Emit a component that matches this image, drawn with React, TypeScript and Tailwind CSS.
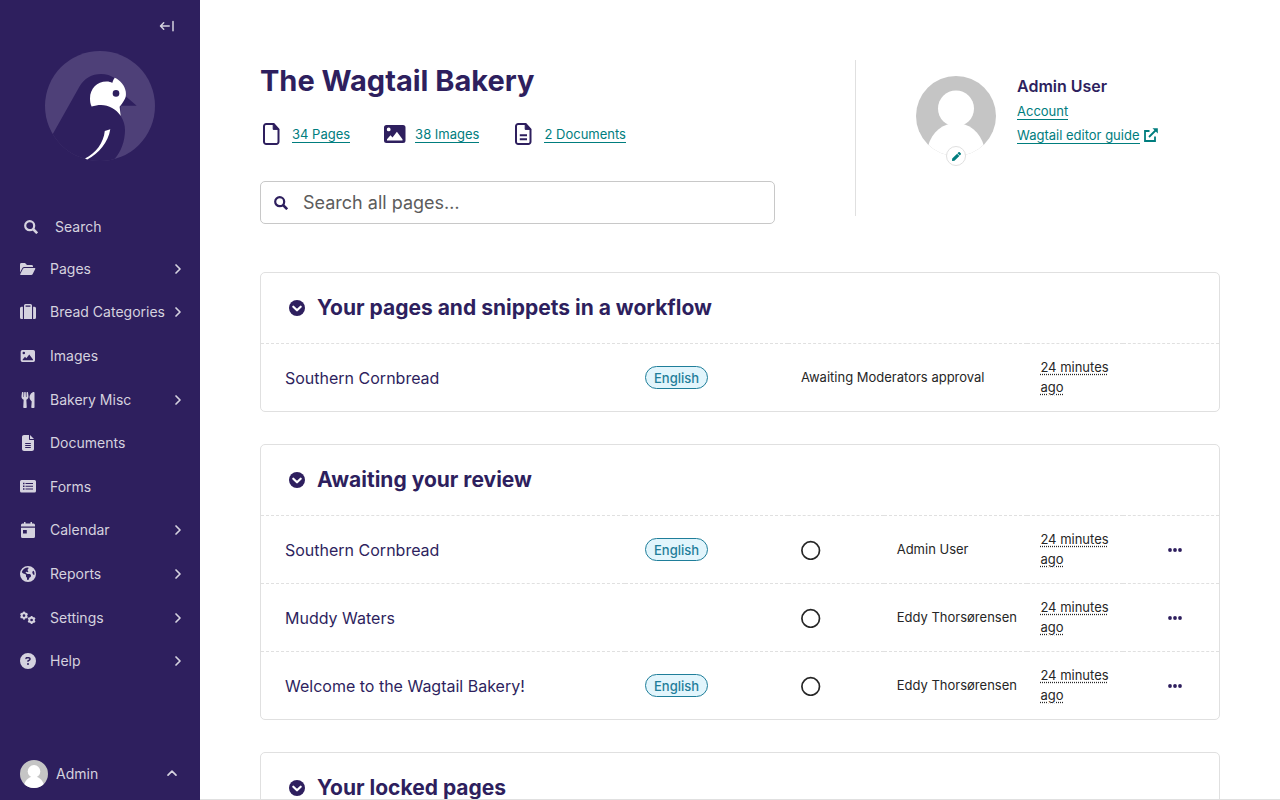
import type { ReactNode } from "react";
import { FaUtensils, FaPen } from "react-icons/fa";
import { FaFileLines, FaEarthAmericas, FaCircleQuestion } from "react-icons/fa6";

function Logo() {
  return (
    <svg viewBox="0 0 110 110" className="size-[110px]" aria-hidden="true">
      <defs>
        <clipPath id="logo-circle">
          <circle cx="55" cy="55" r="55" />
        </clipPath>
      </defs>
      <circle cx="55" cy="55" r="55" fill="#4e4078" />
      <g clipPath="url(#logo-circle)">
        <path
          d="M7.5 83.5 L34.5 35.5 C39 27.5 47 23 56 23 C61 23 66 24.5 70 27.3 L81 45.5 L91.7 54.7 L75.5 54.7 L75.7 65 C78.5 69 80 74 80 79 C80 90 76 101 69.5 108 L60 115 L20 110 L0 95 Z"
          fill="#2e1f5e"
        />
      </g>
      <path
        d="M69.8 26.8 C75.5 29.5 79.8 34.5 80.8 40.8 C81 42.5 81 44 80.8 45.2 C80 49 76 54 74.6 55.8 L75.8 65 C71 58 64 54 56 54 C53 54 49.5 54.6 46.6 55.6 C45.3 53 45 50 45 47.3 C45 38 52 30.6 61.5 30.6 C64 30.6 66 31.2 67.2 32 C67.8 31.2 68 28.6 69.8 26.8 Z"
        fill="#fff"
      />
      <circle cx="71" cy="42.4" r="3.3" fill="#2e1f5e" />
      <path
        d="M65.3 78.3 L59.8 80 C58.5 92 51 102 40 107.6 L42.2 108.6 C54 102 63 92 65.3 78.3 Z"
        fill="#fff"
      />
    </svg>
  );
}

function Avatar({ className }: { className: string }) {
  return (
    <svg viewBox="0 0 80 80" className={`rounded-full ${className}`} role="img" aria-label="Avatar">
      <rect width="80" height="80" fill="#c5c5c5" />
      <g fill="#fff">
        <circle cx="40" cy="32.5" r="18" />
        <path d="M12 70 C16 56 27 47 40 47 C53 47 64 56 68 70 L68 80 L12 80 Z" />
      </g>
    </svg>
  );
}

function FolderIcon() {
  return (
    <svg viewBox="0 0 16 16" className="size-4" fill="currentColor" aria-hidden="true">
      <path d="M0 3.4A1.4 1.4 0 0 1 1.4 2H5L7 3.9h4.6A1.4 1.4 0 0 1 13 5.3V6H4.4A2.6 2.6 0 0 0 2.1 7.4L0 11.5Z" />
      <path d="M4.4 6.9h10.2c.6 0 .9.6.6 1.1l-2.6 5.2a1.6 1.6 0 0 1-1.4.8H1c-.6 0-1-.6-.7-1.100L3 7.7a1.600 1.600 0 0 1 1.400-.8Z" />
    </svg>
  );
}

function SuitcaseIcon() {
  return (
    <svg viewBox="0 0 16 16" className="size-4" fill="currentColor" aria-hidden="true">
      <path
        fillRule="evenodd"
        d="M4 15V1.500A1.500 1.500 0 0 1 5.500 0h5A1.500 1.500 0 0 1 12 1.500V15ZM5.600 1.500v1.200h4.800V1.500Z"
      />
      <path d="M2.900 2.700V15H1.500A1.500 1.500 0 0 1 0 13.500V4.200a1.500 1.500 0 0 1 1.500-1.500ZM13.100 2.700V15h1.400A1.500 1.500 0 0 0 16 13.500V4.200a1.500 1.500 0 0 0-1.500-1.500Z" />
    </svg>
  );
}

function ImageIcon({ className }: { className: string }) {
  return (
    <svg viewBox="0 0 24 24" className={className} fill="currentColor" aria-hidden="true">
      <path
        fillRule="evenodd"
        d="M3.500 3h16.500a2.500 2.500 0 0 1 2.500 2.500v13a2.500 2.500 0 0 1-2.500 2.500H3.500A2.500 2.500 0 0 1 1 18.500v-13A2.500 2.500 0 0 1 3.500 3ZM5.700 5.500a1.900 1.900 0 1 0 0 3.800 1.900 1.900 0 0 0 0-3.800ZM4 18.500h15.500v-1.200L13.900 9.700 9.500 15.500 7.500 13.200 4 17.300Z"
      />
    </svg>
  );
}

function SearchIcon() {
  return (
    <svg
      viewBox="0 0 14 14"
      className="size-[14px] shrink-0"
      fill="none"
      stroke="currentColor"
      strokeWidth="2.200"
      aria-hidden="true"
    >
      <circle cx="5.700" cy="5.700" r="4.500" />
      <path d="M9 9L13.200 13.200" strokeWidth="2.600" />
    </svg>
  );
}

function ListIcon() {
  return (
    <svg viewBox="0 0 16 16" className="size-4" fill="currentColor" aria-hidden="true">
      <path
        fillRule="evenodd"
        d="M1.500 1h13A1.500 1.500 0 0 1 16 2.500v9.500a1.500 1.500 0 0 1-1.500 1.500h-13A1.500 1.500 0 0 1 0 12V2.500A1.500 1.500 0 0 1 1.500 1ZM3 3.700v1.500h1.500v-1.500ZM5.500 3.900v1.100h7.500v-1.100ZM3 6.500v1.500h1.500v-1.500ZM5.500 6.700v1.100h7.500v-1.100ZM3 9.300v1.500h1.500v-1.500ZM5.500 9.500v1.100h7.500v-1.100Z"
      />
    </svg>
  );
}

function CalendarIcon() {
  return (
    <svg viewBox="0 0 16 16" className="size-4" fill="currentColor" aria-hidden="true">
      <path d="M4 0h1.500v1.600h5V0H12v1.600h1.500A1.500 1.500 0 0 1 15 3.100V4.500H1V3.100a1.500 1.500 0 0 1 1.500-1.500H4Z" />
      <path
        fillRule="evenodd"
        d="M1 5.700h14v8.800a1.500 1.500 0 0 1-1.500 1.500h-11A1.500 1.500 0 0 1 1 14.500ZM3 8v3.600h3.800V8Z"
      />
    </svg>
  );
}

function Gear({ x, y }: { x: number; y: number }) {
  return (
    <g transform={`translate(${x} ${y})`}>
      <circle r="2.300" fill="none" stroke="currentColor" strokeWidth="1.900" />
      {[0, 60, 120, 180, 240, 300].map((a) => (
        <rect key={a} x="-0.900" y="-4" width="1.800" height="1.500" transform={`rotate(${a})`} />
      ))}
    </g>
  );
}

function CogsIcon() {
  return (
    <svg viewBox="0 0 16 16" className="size-4" fill="currentColor" aria-hidden="true">
      <Gear x={4} y={5.6} />
      <Gear x={11.6} y={10} />
    </svg>
  );
}

function Chevron({ up }: { up?: boolean }) {
  return (
    <svg
      viewBox="0 0 16 16"
      className="size-4 shrink-0"
      fill="none"
      stroke="currentColor"
      strokeWidth="1.700"
      strokeLinecap="round"
      strokeLinejoin="round"
      aria-hidden="true"
    >
      <path d={up ? "M4 9.200 L8 5.200 L12 9.200" : "M6 4 L10 8 L6 12"} />
    </svg>
  );
}

type NavItem = { label: string; icon: ReactNode; sub?: boolean };

const navItems: NavItem[] = [
  { label: "Pages", icon: <FolderIcon />, sub: true },
  { label: "Bread Categories", icon: <SuitcaseIcon />, sub: true },
  { label: "Images", icon: <ImageIcon className="size-4" /> },
  { label: "Bakery Misc", icon: <FaUtensils className="size-4" />, sub: true },
  { label: "Documents", icon: <FaFileLines className="size-4" /> },
  { label: "Forms", icon: <ListIcon /> },
  { label: "Calendar", icon: <CalendarIcon />, sub: true },
  { label: "Reports", icon: <FaEarthAmericas className="size-4" />, sub: true },
  { label: "Settings", icon: <CogsIcon />, sub: true },
  { label: "Help", icon: <FaCircleQuestion className="size-4" />, sub: true },
];

function Sidebar() {
  return (
    <aside className="flex w-[200px] shrink-0 flex-col bg-[#2e1f5e] text-sm text-[#d5d2df]">
      <div className="flex justify-end px-[25px] pt-[18px]">
        <button type="button" aria-label="Collapse sidebar" className="size-4">
          <svg
            viewBox="0 0 16 16"
            className="size-4"
            fill="none"
            stroke="currentColor"
            strokeWidth="1.500"
            strokeLinecap="round"
            strokeLinejoin="round"
            aria-hidden="true"
          >
            <path d="M10.200 8H1.700M4.700 4.800 L1.500 8 L4.700 11.200M14 3.400V12.800" />
          </svg>
        </button>
      </div>
      <a href="#home" aria-label="Home" className="mt-[17px] self-center">
        <Logo />
      </a>
      <button type="button" className="mt-11 flex h-[42px] items-center gap-[17px] px-6 pt-0.5 text-left">
        <SearchIcon />
        Search
      </button>
      <nav aria-label="Main menu">
        <ul className="flex h-[436px] flex-col">
          {navItems.map((item) => (
            <li key={item.label} className="flex flex-1">
              <a href="#menu" className="flex flex-1 items-center pr-[14px] pl-5">
                {item.icon}
                <span className="ml-[14px] flex-1 whitespace-nowrap">{item.label}</span>
                {item.sub && <Chevron />}
              </a>
            </li>
          ))}
        </ul>
      </nav>
      <button type="button" className="mt-auto flex h-[52px] items-center px-5 text-left">
        <Avatar className="size-7" />
        <span className="ml-2 flex-1">Admin</span>
        <Chevron up />
      </button>
    </aside>
  );
}

function DocIcon({ lines }: { lines?: boolean }) {
  return (
    <svg viewBox="0 0 24 24" className="size-6" fill="none" stroke="currentColor" strokeWidth="2" aria-hidden="true">
      <path d="M13.500 2H6.200A2.200 2.200 0 0 0 4 4.200v15.600A2.200 2.200 0 0 0 6.200 22h10.100a2.200 2.200 0 0 0 2.200-2.200V7.300L13.700 2Z" />
      <path d="M13.200 2v5.400H18.500Z" fill="currentColor" strokeWidth="1" />
      {lines && <path d="M7.800 13.200h7.200M7.800 17.200h7.200" />}
    </svg>
  );
}

const link = "border-b border-[#007d7e] pt-px text-[13px] leading-4 text-[#007d7e]";

function Summary() {
  const items = [
    { label: "34 Pages", icon: <DocIcon /> },
    { label: "38 Images", icon: <ImageIcon className="size-6" /> },
    { label: "2 Documents", icon: <DocIcon lines /> },
  ];
  return (
    <ul className="flex gap-[33px]">
      {items.map((item) => (
        <li key={item.label} className="flex items-center gap-2 text-[#2e1f5e]">
          {item.icon}
          <a href="#summary" className={link}>
            {item.label}
          </a>
        </li>
      ))}
    </ul>
  );
}

function Header() {
  return (
    <header className="flex">
      <div className="flex-1">
        <h1 className="text-[29px] leading-[42px] font-bold text-[#2e1f5e]">The Wagtail Bakery</h1>
        <div className="mt-5">
          <Summary />
        </div>
        <label className="mt-[35px] flex h-[43px] items-center gap-[15px] rounded-[5px] border border-[#c8c8c8] px-[13px] text-[#2e1f5e]">
          <SearchIcon />
          <input
            type="search"
            aria-label="Search all pages"
            placeholder="Search all pages…"
            className="min-w-0 flex-1 text-lg outline-none placeholder:text-[#5c5c5c]"
          />
        </label>
      </div>
      <div className="ml-20 flex h-[156px] w-[365px] gap-[21px] border-l border-[#e0e0e0] pt-4 pl-[60px]">
        <div className="relative size-20">
          <Avatar className="size-20" />
          <a
            href="#avatar"
            aria-label="Edit avatar"
            className="absolute -bottom-[10px] left-[30px] flex size-5 items-center justify-center rounded-full border border-[#e0e0e0] bg-white text-[#007d7e]"
          >
            <FaPen className="size-[9px]" />
          </a>
        </div>
        <div className="flex flex-col items-start">
          <h2 className="text-base leading-5 font-semibold text-[#2e1f5e]">Admin User</h2>
          <a href="#account" className={`mt-[6px] ${link}`}>
            Account
          </a>
          <a href="#guide" className="mt-[6px] flex items-center gap-1">
            <span className={link}>Wagtail editor guide</span>
            <svg
              viewBox="0 0 14 14"
              className="size-[14px] text-[#007d7e]"
              fill="none"
              stroke="currentColor"
              strokeWidth="1.800"
              aria-hidden="true"
            >
              <path d="M5.500 3H1V13H11V8.500M5 9L12 2" />
              <path d="M8.500 0.200H13.800V5.500Z" fill="currentColor" stroke="none" />
            </svg>
          </a>
        </div>
      </div>
    </header>
  );
}

function Panel({ title, children }: { title: string; children?: ReactNode }) {
  return (
    <section className="rounded-[5px] border border-[#e0e0e0]">
      <h2 className="text-[#2e1f5e]">
        <button type="button" className="flex h-[70px] items-center gap-3 pb-px pl-7 text-[21px] leading-8 font-bold">
          <svg viewBox="0 0 16 16" className="size-4" aria-hidden="true">
            <circle cx="8" cy="8" r="8" fill="currentColor" />
            <path
              d="M4.300 6.700L8 10.300L11.700 6.700"
              fill="none"
              stroke="#fff"
              strokeWidth="2.200"
              strokeLinecap="round"
              strokeLinejoin="round"
            />
          </svg>
          {title}
        </button>
      </h2>
      {children}
    </section>
  );
}

type Row = { title: string; english?: boolean; status?: string; user?: string };

function PageTable({ label, rows }: { label: string; rows: Row[] }) {
  const cell = "h-[68px] border-t border-dashed border-[#e0e0e0] p-0 align-middle";
  return (
    <table
      aria-label={label}
      className="w-full table-fixed border-separate border-spacing-0 text-[13px] leading-5 text-[#262626]"
    >
      <colgroup>
        <col className="w-[38%]" />
        <col className="w-[17%]" />
        <col className="w-[10%]" />
        <col className="w-[15%]" />
        <col className="w-[10%]" />
        <col className="w-[10%]" />
      </colgroup>
      <tbody>
        {rows.map((row) => (
          <tr key={row.title}>
            <td className={`${cell} pl-6`}>
              <a href="#page" className="text-base text-[#2e1f5e]">
                {row.title}
              </a>
            </td>
            <td className={`${cell} pl-5`}>
              {row.english && (
                <span className="inline-flex h-[23px] items-center rounded-full border border-[#1f7e9a] bg-[#e2f5fc] px-2 font-medium text-[#1f7e9a]">
                  English
                </span>
              )}
            </td>
            {row.status ? (
              <td colSpan={2} className={`${cell} pb-0.5 pl-[13px]`}>
                {row.status}
              </td>
            ) : (
              <>
                <td className={`${cell} pl-[13px]`}>
                  <svg viewBox="0 0 20 20" className="size-5" fill="none" role="img" aria-label="In progress">
                    <circle cx="9.700" cy="10.500" r="8.800" stroke="#262626" strokeWidth="1.700" />
                  </svg>
                </td>
                <td className={`${cell} pb-0.5 pl-[13px] whitespace-nowrap`}>{row.user}</td>
              </>
            )}
            <td className={`${cell} pb-0.5 pl-[13px]`}>
              <span className="underline decoration-dotted underline-offset-2">24 minutes ago</span>
            </td>
            <td className={`${cell} pl-11`}>
              {!row.status && (
                <button type="button" aria-label="More options" className="block">
                  <svg viewBox="0 0 16 16" className="size-4" fill="#2e1f5e" aria-hidden="true">
                    <circle cx="3" cy="8" r="1.900" />
                    <circle cx="8" cy="8" r="1.900" />
                    <circle cx="13" cy="8" r="1.900" />
                  </svg>
                </button>
              )}
            </td>
          </tr>
        ))}
      </tbody>
    </table>
  );
}

export default function App() {
  return (
    <div className="flex h-screen bg-white font-['Inter',sans-serif] antialiased">
      <Sidebar />
      <div className="flex min-w-0 flex-1 flex-col">
        <main className="flex min-h-0 flex-1 flex-col gap-8 overflow-hidden px-[60px] pt-[60px]">
          <div className="pb-4">
            <Header />
          </div>
          <Panel title="Your pages and snippets in a workflow">
            <PageTable
              label="Your pages and snippets in a workflow"
              rows={[{ title: "Southern Cornbread", english: true, status: "Awaiting Moderators approval" }]}
            />
          </Panel>
          <Panel title="Awaiting your review">
            <PageTable
              label="Awaiting your review"
              rows={[
                { title: "Southern Cornbread", english: true, user: "Admin User" },
                { title: "Muddy Waters", user: "Eddy Thorsørensen" },
                { title: "Welcome to the Wagtail Bakery!", english: true, user: "Eddy Thorsørensen" },
              ]}
            />
          </Panel>
          <Panel title="Your locked pages" />
        </main>
        <div className="h-px bg-[#e0e0e0]" />
      </div>
    </div>
  );
}
